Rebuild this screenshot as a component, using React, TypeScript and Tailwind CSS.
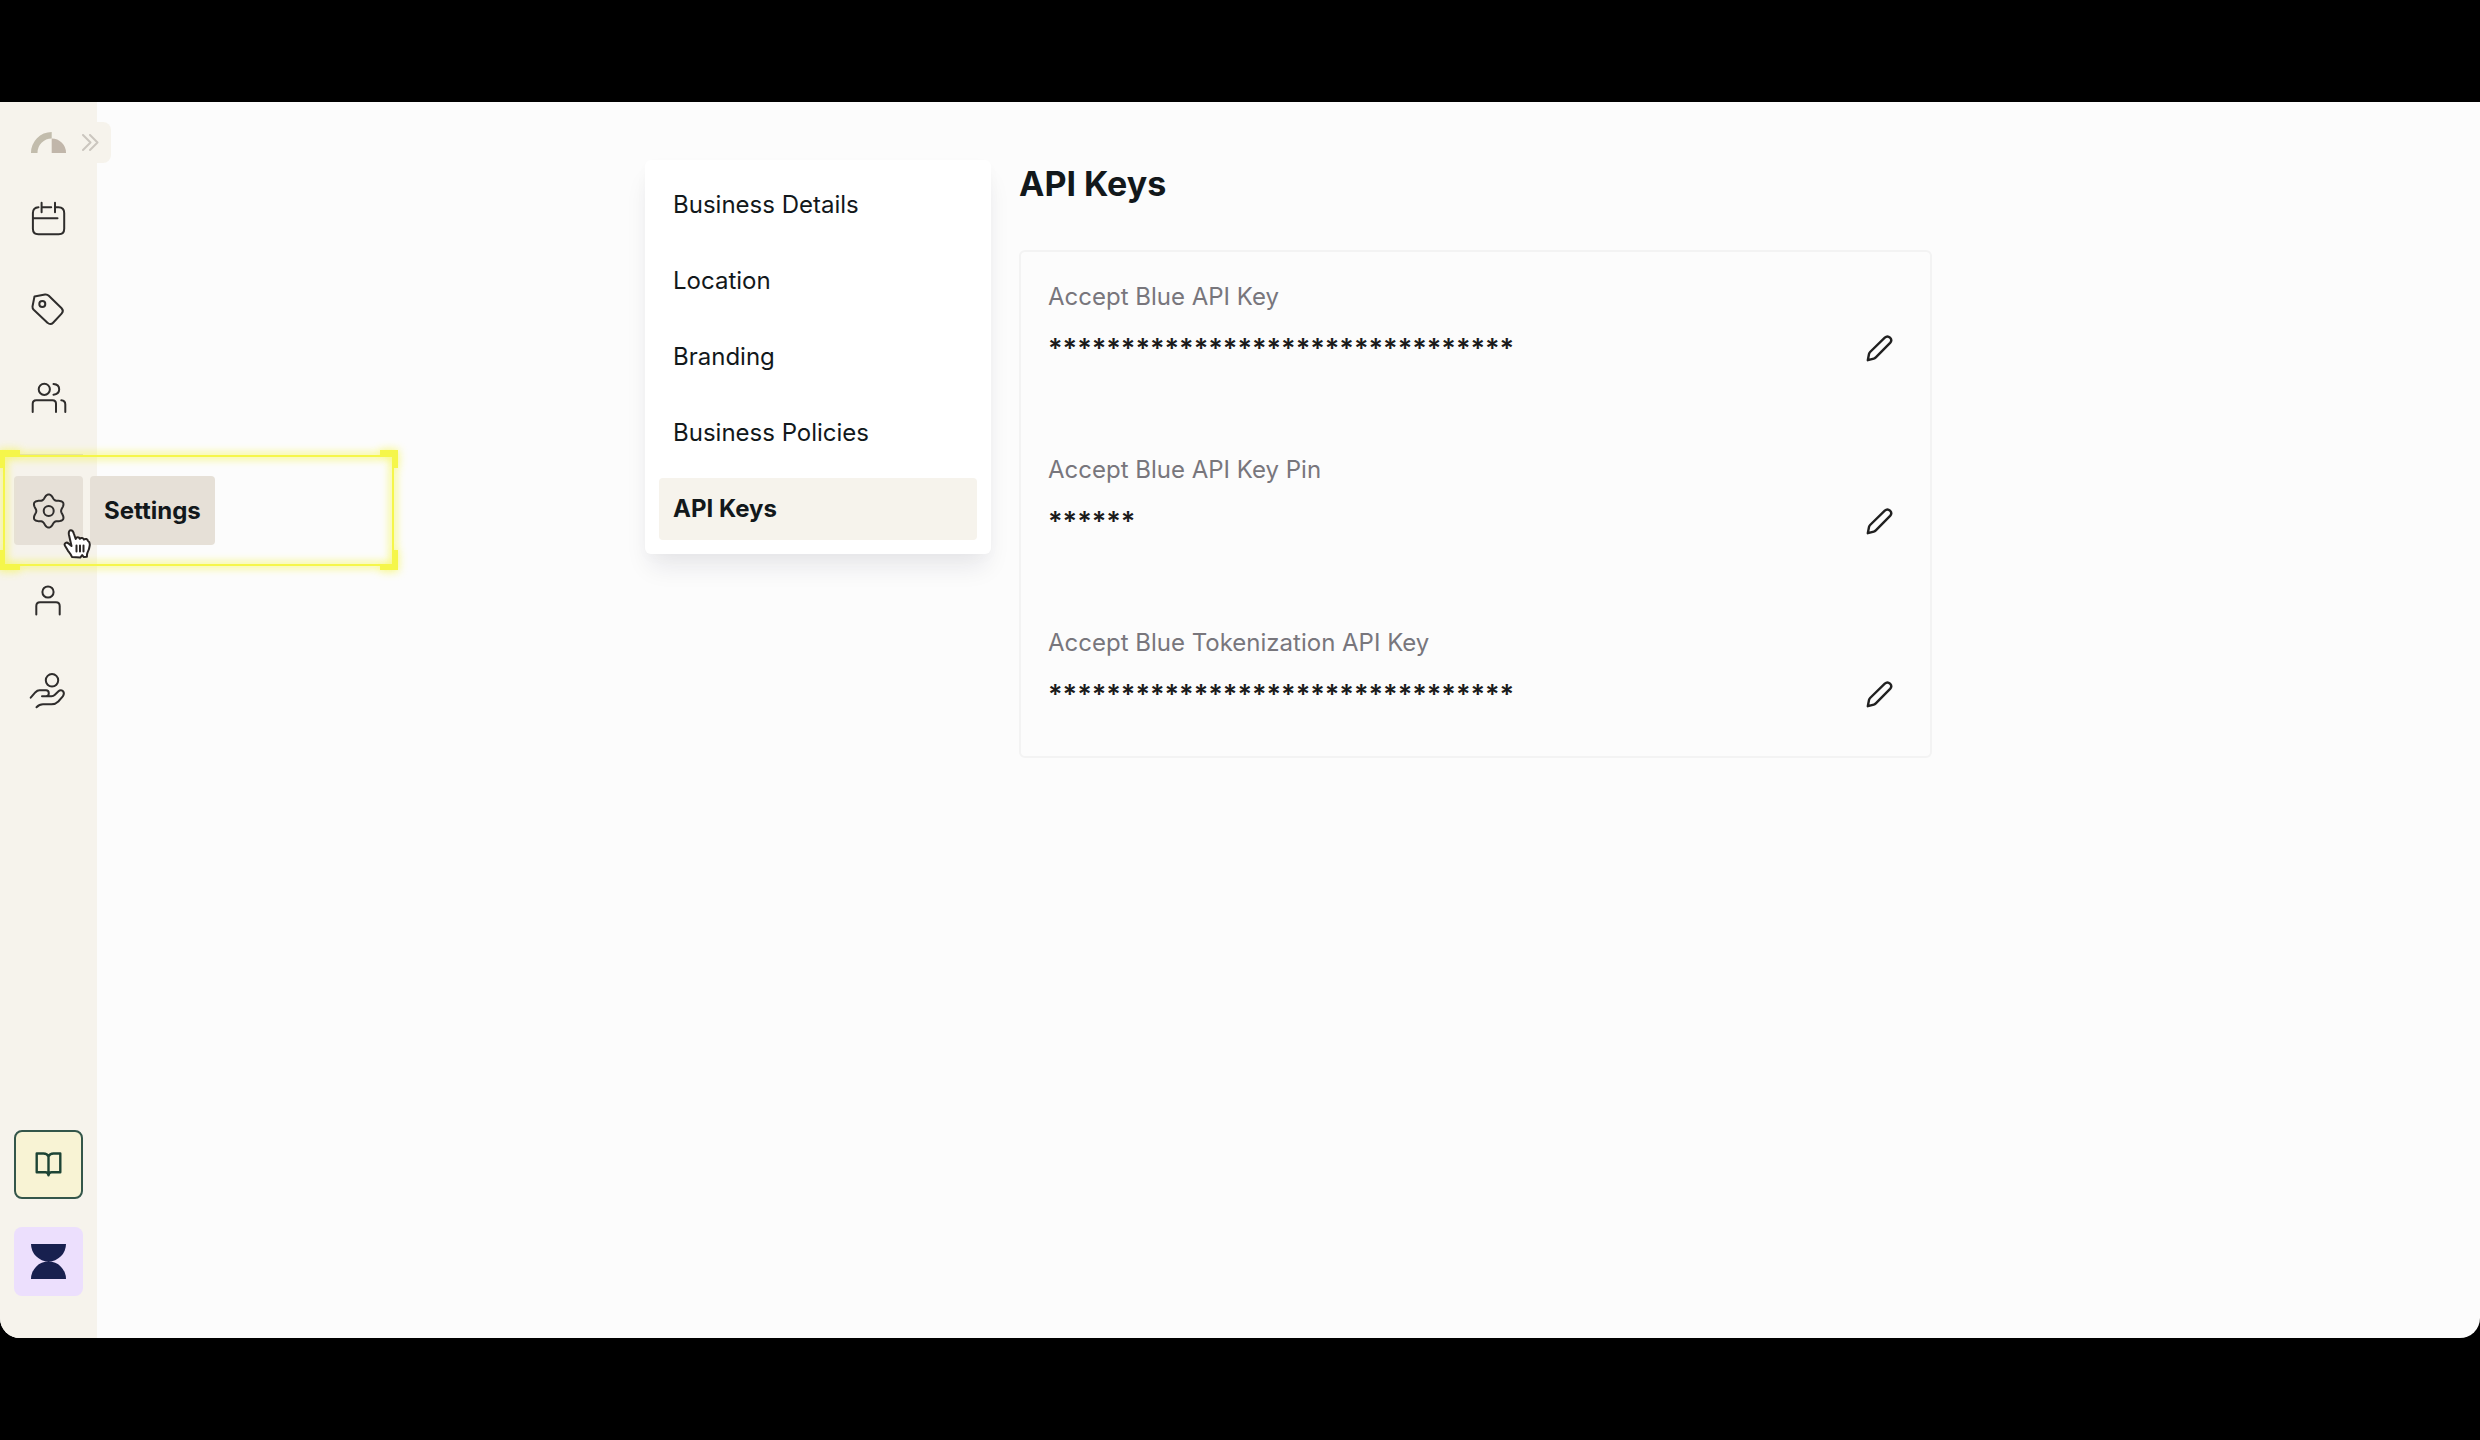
import type { ReactNode } from "react";

function Glyph({ children }: { children: ReactNode }) {
  return (
    <svg
      viewBox="-0.5 -0.5 43 43"
      className="size-[43px] fill-none stroke-[#2f2d2c] stroke-2"
      strokeLinecap="round"
      strokeLinejoin="round"
      aria-hidden="true"
    >
      {children}
    </svg>
  );
}

const gearPath =
  Array.from({ length: 121 }, (_, i) => {
    const a = (i / 120) * Math.PI * 2;
    const r = 12.4 + 4.2 * Math.pow((1 + Math.cos(6 * a)) / 2, 1.1);
    return `${i ? "L" : "M"}${(21.2 + r * Math.sin(a)).toFixed(2)} ${(21.5 - r * Math.cos(a)).toFixed(2)}`;
  }).join("") + "Z";

const CalendarIcon = () => (
  <Glyph>
    <path d="M11 9.7c-3.400.2-5.600 2-5.600 5.800v15.700c0 3.600 1.900 5.500 5.500 5.500h20.300c3.600 0 5.500-1.900 5.500-5.500V15.500c0-3.800-2.200-5.800-5.800-5.800h-3.400M14.100 5.300v9.400M27.500 5.300v9.400M15.500 9.700h8.200M5.400 20.800H30" />
  </Glyph>
);
const TagIcon = () => (
  <Glyph>
    <path d="M7 8.900 17.500 7c1.600-.2 2.700.1 3.800 1.200l12.800 12.600c1.600 1.700 1.600 3.600 0 5.300l-8.500 9.200c-1.600 1.700-3.800 1.700-5.400.1L6.200 22.300C5.200 21.300 4.900 20.300 5 19Z" />
    <circle cx="14.8" cy="16.5" r="3" />
  </Glyph>
);
const UsersIcon = () => (
  <Glyph>
    <circle cx="16.8" cy="11.8" r="5.6" />
    <path d="M5.200 34.500v-8.200c0-2.300 1.200-3.500 3.500-3.500H25c2.300 0 3.500 1.200 3.500 3.500v8.200M26 6.500c3.700.3 5.700 2.400 5.700 5.300s-2 5-5.700 5.400M33.800 22.800c2.700.2 4 1.600 4 4.200v7.500" />
  </Glyph>
);
const GearIcon = () => (
  <Glyph>
    <path d={gearPath} />
    <circle cx="21.2" cy="21.5" r="5" />
  </Glyph>
);
const PersonIcon = () => (
  <Glyph>
    <circle cx="20.5" cy="12.5" r="5.6" />
    <path d="M8.800 35v-8.500c0-2.400 1.300-3.700 3.700-3.700h16c2.400 0 3.700 1.300 3.700 3.700V35" />
  </Glyph>
);
const HandIcon = () => (
  <Glyph>
    <circle cx="24.5" cy="10.8" r="6.2" />
    <path d="M3.200 28.200 8 22.700c1.300-1.400 2.300-1.900 4-1.900h6.500c1.800 0 2.800 1.200 2.800 3s-1 3-2.800 3h-4H24c1.500 0 2.300-.4 3.400-1.500l3.600-3.600c1.500-1.500 3.600-1.300 4.700.2 1 1.500.7 3.400-.4 4.900L30.800 32c-2 2-4 2.800-6.800 2.800h-8.500c-2.600 0-4.300.7-6.500 3" />
  </Glyph>
);

function Cursor() {
  return (
    <svg
      viewBox="0 0 28 31"
      className="pointer-events-none absolute top-[53px] left-[49px] z-30 h-[31px] w-[28px] fill-white stroke-[#2a2624]"
      strokeWidth="2"
      strokeLinejoin="round"
      strokeLinecap="round"
      aria-hidden="true"
    >
      <path d="M9 28c-.8-2.500-2.500-4.200-4-6.200l-3-5c-1.300-2.300 1.500-4.300 3.500-2.300L8.500 17 6 6c-.6-3 .2-4.500 1.700-4.700C9.500 1.100 10.300 2.600 11 5l1.700 5c.8-2.300 3.300-2 4.100-.2 1.200-1.500 3.500-1 4.200.8 1.500-1.300 3.500-.6 4 1.200 1.700.8 2 2.600 1.700 4.800-.3 3.200-.8 4.200-2.200 7-.7 1.700-.5 2.400-.6 4.200l-3.100.3-1.600-2-2 2.500Z" />
      <path d="M13.500 16.500v6M17 16.500v6M20.500 16.500v6" />
    </svg>
  );
}

function Highlight() {
  return (
    <svg
      viewBox="-14 -40 430 150"
      className="pointer-events-none absolute -top-[40px] -left-[14px] z-20 h-[150px] w-[430px] max-w-none fill-none stroke-[#f5f64a]"
      aria-hidden="true"
    >
      <defs>
        <filter id="glow" x="-20%" y="-40%" width="140%" height="180%">
          <feGaussianBlur stdDeviation="4" />
        </filter>
      </defs>
      <g filter="url(#glow)" opacity="0.7">
        <rect x="-10" y="-20" width="389" height="109" strokeWidth="6" />
        <path d="M-12-6v-17H6M366-23h15V-8M381 74v18h-15M6 92h-18V74" strokeWidth="7" />
      </g>
      <rect x="-10" y="-20" width="389" height="109" strokeWidth="2" />
      <path d="M-12-8v-15H6M366-23h15V-8M381 74v17h-15M6 91h-18V74" strokeWidth="6" />
    </svg>
  );
}

function NavButton({ label, children }: { label: string; children: ReactNode }) {
  return (
    <button type="button" aria-label={label} className="flex size-[69px] items-center justify-center rounded-sm">
      {children}
    </button>
  );
}

function Sidebar() {
  return (
    <aside className="relative z-10 flex w-[97px] shrink-0 flex-col justify-between bg-[#f6f3ec] pt-5 pb-[42px]">
      <nav className="flex flex-col items-center gap-[21px]">
        <div className="flex h-[41px] w-[111px] items-center gap-4 self-start rounded-r-lg bg-[#f6f3ec] pl-[31px]">
          <svg viewBox="0 0 35 21" className="h-[21px] w-[35px]" role="img" aria-label="Logo">
            <path d="M0 21A20.700 20.700 0 0 1 20.700 0V6.500A14.300 14.300 0 0 0 6.500 21Z" fill="#c2bcac" />
            <path d="M20.700 6.500A14.300 14.300 0 0 1 35 21H20.700Z" fill="#c1b6aa" />
          </svg>
          <button type="button" aria-label="Expand sidebar">
            <svg
              viewBox="0 0 17 18"
              className="h-[18px] w-[17px] fill-none stroke-[#cbc6bf] stroke-2"
              strokeLinecap="round"
              strokeLinejoin="round"
              aria-hidden="true"
            >
              <path d="m1 1 7.500 7.500L1 16M8 1l7.500 7.500L8 16" />
            </svg>
          </button>
        </div>
        <NavButton label="Calendar"><CalendarIcon /></NavButton>
        <NavButton label="Pricing"><TagIcon /></NavButton>
        <NavButton label="Customers"><UsersIcon /></NavButton>
        <hr className="w-[69px] border-t border-[#dcd7cf]" />
        <div className="relative">
          <button
            type="button"
            aria-label="Settings"
            className="flex size-[69px] items-center justify-center rounded-sm bg-[#e6e0d7]"
          >
            <GearIcon />
          </button>
          <div
            role="tooltip"
            className="absolute top-0 left-[76px] flex h-[69px] items-center rounded-sm bg-[#e6e0d7] px-3.5 text-[24px] font-bold"
          >
            Settings
          </div>
          <Highlight />
          <Cursor />
        </div>
        <NavButton label="Account"><PersonIcon /></NavButton>
        <NavButton label="Payments"><HandIcon /></NavButton>
      </nav>
      <div className="flex flex-col items-center gap-7">
        <button
          type="button"
          aria-label="Guide"
          className="flex size-[69px] items-center justify-center rounded-lg border-2 border-[#34564a] bg-[#f8f3d4]"
        >
          <svg
            viewBox="0 0 27 25"
            className="h-[25px] w-[27px] fill-none stroke-[#1d4435]"
            strokeWidth="2.4"
            strokeLinejoin="round"
            strokeLinecap="round"
            aria-hidden="true"
          >
            <path d="M13.500 4.500C12.500 2.200 11 1.500 8.500 1.500H1.700v18.800h8.800c1.800 0 2.700.8 3 3 .3-2.200 1.200-3 3-3h8.800V1.500H18.500c-2.500 0-4 .7-5 3ZM13.500 4.500v18.500" />
          </svg>
        </button>
        <button
          type="button"
          aria-label="Workspace"
          className="flex size-[69px] items-center justify-center rounded-lg bg-[#ecdffd]"
        >
          <svg viewBox="0 0 35 35" className="size-[35px] fill-[#18204f]" aria-hidden="true">
            <path d="M0 0h35a17.500 17.500 0 0 1-35 0ZM0 35a17.500 17.500 0 0 1 35 0Z" />
          </svg>
        </button>
      </div>
    </aside>
  );
}

const sections = ["Business Details", "Location", "Branding", "Business Policies", "API Keys"];

const keys = [
  { label: "Accept Blue API Key", value: "********************************" },
  { label: "Accept Blue API Key Pin", value: "******" },
  { label: "Accept Blue Tokenization API Key", value: "********************************" },
];

export default function App() {
  return (
    <div className="flex min-h-screen flex-col bg-black py-[102px] font-['Inter',sans-serif] text-[24px] leading-[35px] text-[#12181b]">
      <div className="flex flex-1 overflow-hidden rounded-b-[20px] bg-[#fcfcfc]">
        <Sidebar />
        <main className="flex flex-1 justify-center">
          <div className="flex w-full max-w-[1287px] items-start gap-7 pt-[58px]">
            <nav
              aria-label="Settings sections"
              className="flex w-[346px] shrink-0 flex-col gap-3.5 rounded-md bg-white p-3.5 shadow-[0_17px_26px_-5px_rgba(20,20,50,0.09),0_4px_14px_rgba(20,20,50,0.02)]"
            >
              {sections.map((name) => (
                <a
                  key={name}
                  href="#"
                  aria-current={name === "API Keys" ? "page" : undefined}
                  className="flex h-[62px] items-center rounded-sm px-3.5 pb-px aria-[current=page]:bg-[#f6f3ec] aria-[current=page]:font-bold"
                >
                  {name}
                </a>
              ))}
            </nav>
            <section className="flex-1">
              <h1 className="text-[34px] leading-[48px] font-bold">API Keys</h1>
              <dl className="mt-[42px] flex flex-col gap-[69px] rounded-md border-2 border-[#f3f3f3] p-[27px]">
                {keys.map(({ label, value }) => (
                  <div key={label}>
                    <dt className="text-[#78767c]">{label}</dt>
                    <dd className="flex h-[69px] items-center justify-between text-[27px] font-semibold text-[#1b1b1b]">
                      {value}
                      <button
                        type="button"
                        aria-label={`Edit ${label}`}
                        className="flex h-full w-[47px] items-center justify-center"
                      >
                        <svg
                          viewBox="-0.5 -0.5 29 29"
                          className="size-[29px] fill-none stroke-[#202020]"
                          strokeWidth="2.4"
                          strokeLinejoin="round"
                          aria-hidden="true"
                        >
                          <path d="M2.300 25.700 3.500 19.500c.2-.9.500-1.400 1.100-2L19.300 3.100c3.600-3.200 8.500 1.600 5.300 5.300L10.300 22.900c-.6.6-1.100 1-2 1.200Z" />
                        </svg>
                      </button>
                    </dd>
                  </div>
                ))}
              </dl>
            </section>
          </div>
        </main>
      </div>
    </div>
  );
}
